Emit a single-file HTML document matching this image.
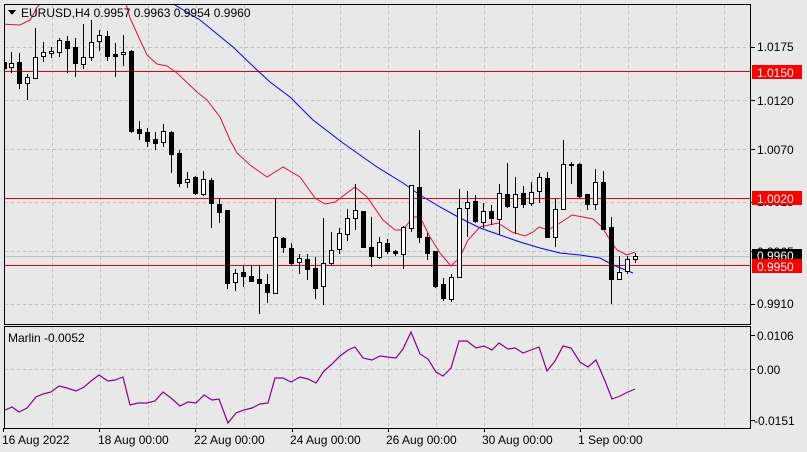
<!DOCTYPE html>
<html><head><meta charset="utf-8">
<style>
html,body{margin:0;padding:0;background:#e8e8e8;}
body{width:807px;height:452px;overflow:hidden;position:relative;font-family:"Liberation Sans",sans-serif;}
svg{position:absolute;left:0;top:0;}
text{font-family:"Liberation Sans",sans-serif;font-size:12px;}
</style></head><body>
<svg id="s" width="807" height="452" xmlns="http://www.w3.org/2000/svg" shape-rendering="crispEdges">
<rect width="807" height="452" fill="#e8e8e8"/>
<defs><clipPath id="mc"><rect x="5" y="5" width="745" height="319"/></clipPath>
<clipPath id="ic"><rect x="5" y="327" width="745" height="101"/></clipPath></defs>
<g id="grid" stroke="#c4c4c4" stroke-dasharray="3,3" stroke-width="1"></g>
<g clip-path="url(#mc)">
<line x1="4" y1="256.5" x2="750" y2="256.5" stroke="#c0c0c0"/>
<line x1="4" y1="71.5" x2="750" y2="71.5" stroke="#f00000"/>
<line x1="4" y1="198.5" x2="750" y2="198.5" stroke="#f00000"/>
<line x1="4" y1="265.5" x2="750" y2="265.5" stroke="#f00000"/>
<polyline shape-rendering="auto" fill="none" stroke="#0000ff" stroke-width="1" points="170,2 200,20 233,47 257,70 270,82 290,97 313,120 343,143 377,167 403,183 420,195 440,207 460,218 480,228 500,235 520,242 540,248 560,253 580,255 600,258 613,265 633,273"/>
<polyline shape-rendering="auto" fill="none" stroke="#e0103c" stroke-width="1" points="0,24 20,25 30,20 33,15 37,7 45,0 70,4 90,4 110,0 125,0 130,18 140,40 147,55 157,64 167,66 177,73 197,92 207,100 220,117 230,140 237,153 250,165 267,177 283,167 300,177 315,198 325,204 335,202 355,187 367,197 383,220 395,230 403,230 413,217 420,217 430,237 440,253 451,266 460,257 468,240 480,227 498,223 512,232 525,236 533,232 539,227 548,230 560,223 572,215 583,217 593,219 602,227 610,240 617,250 627,255 635,252"/>
<g id="candles"></g>
</g>
<g clip-path="url(#ic)">
<polyline shape-rendering="auto" fill="none" stroke="#8b008b" stroke-width="1.2" points="3,411 12,407 19,412 27,408 36,397 43,394 51,392 59,386 67,388 76,391 84,387 91,381 99,375 108,381 115,380 123,377 130,405 138,403 147,403 155,401 163,392 171,398 180,406 188,402 196,403 204,395 212,400 219,399 228,423 236,413 244,410 252,408 260,404 268,403 275,378 283,378 291,382 300,377 308,379 316,383 324,371 332,364 340,356 348,350 355,347 363,358 372,360 380,356 387,357 396,358 403,349 411,332 420,354 428,359 436,372 443,376 451,368 459,341 467,341 476,348 484,346 492,350 499,343 508,349 515,348 523,353 531,350 539,347 547,371 555,361 563,346 571,348 580,362 588,367 596,360 605,381 612,399 620,396 628,392 635,389"/>
</g>
<rect x="4.5" y="4.5" width="746" height="320" fill="none" stroke="#000"/>
<rect x="4.5" y="326.5" width="746" height="102" fill="none" stroke="#000"/>
<g stroke="#000">
<line x1="751" y1="47.5" x2="755" y2="47.5"/><line x1="751" y1="100.5" x2="755" y2="100.5"/><line x1="751" y1="149.5" x2="755" y2="149.5"/>
<line x1="751" y1="202.5" x2="755" y2="202.5"/><line x1="751" y1="251.5" x2="755" y2="251.5"/><line x1="751" y1="304.5" x2="755" y2="304.5"/>
<line x1="751" y1="335.5" x2="755" y2="335.5"/><line x1="751" y1="369.5" x2="755" y2="369.5"/><line x1="751" y1="420.5" x2="755" y2="420.5"/>
<line x1="3.5" y1="428" x2="3.5" y2="432"/><line x1="99.5" y1="428" x2="99.5" y2="432"/><line x1="195.5" y1="428" x2="195.5" y2="432"/><line x1="292.5" y1="428" x2="292.5" y2="432"/><line x1="388.5" y1="428" x2="388.5" y2="432"/><line x1="484.5" y1="428" x2="484.5" y2="432"/><line x1="580.5" y1="428" x2="580.5" y2="432"/>
</g>
<g fill="#000">
<text x="757" y="51">1.0175</text>
<text x="757" y="105">1.0120</text>
<text x="757" y="154">1.0070</text>
<text x="757" y="206">1.0015</text>
<text x="757" y="256">0.9965</text>
<text x="757" y="308">0.9910</text>
<text x="757" y="340">0.0106</text>
<text x="757" y="374">0.00</text>
<text x="754" y="425">-0.0151</text>
</g>
<rect x="752" y="65" width="50" height="14" fill="#ff0000"/><text x="757" y="77" fill="#fff">1.0150</text>
<rect x="752" y="191" width="50" height="14" fill="#ff0000"/><text x="757" y="203" fill="#fff">1.0020</text>
<rect x="752" y="249" width="50" height="10" fill="#000"/><text x="757" y="260" fill="#fff">0.9960</text>
<rect x="752" y="259" width="50" height="14" fill="#ff0000"/><text x="757" y="271" fill="#fff">0.9950</text>
<polygon points="8,10 16,10 12,15" fill="#000"/>
<text x="21" y="17" fill="#000">EURUSD,H4  0.9957 0.9963 0.9954 0.9960</text>
<text x="8" y="342" fill="#000">Marlin -0.0052</text>
<g fill="#000">
<text x="2" y="444">16 Aug 2022</text>
<text x="98" y="444">18 Aug 00:00</text>
<text x="194" y="444">22 Aug 00:00</text>
<text x="290" y="444">24 Aug 00:00</text>
<text x="386" y="444">26 Aug 00:00</text>
<text x="482" y="444">30 Aug 00:00</text>
<text x="578" y="444">1 Sep 00:00</text>
</g>
</svg>
<script>
(function(){
var NS="http://www.w3.org/2000/svg";
var g=document.getElementById("grid");
function L(x1,y1,x2,y2){var l=document.createElementNS(NS,"line");l.setAttribute("x1",x1);l.setAttribute("y1",y1);l.setAttribute("x2",x2);l.setAttribute("y2",y2);g.appendChild(l);}
[47,100,149,202,251,304].forEach(function(y){L(5,y+.5,750,y+.5);});
L(5,369.5,750,369.5);
for(var x=52;x<750;x+=48){L(x+.5,5,x+.5,324);L(x+.5,327,x+.5,428);}
var c=document.getElementById("candles");
var d=[[4,53,62,68,73,0],[11,52,63,67,72,1],[19,53,62,83,88,0],[27,74,77,83,99,1],[35,28,57,78,78,1],[43,42,52,56,61,1],[51,47,51,53,57,1],[59,38,40,52,56,1],[67,36,41,48,72,0],[75,38,47,63,76,0],[83,24,57,64,68,1],[91,20,42,57,60,1],[99,30,35,41,50,1],[107,31,36,56,60,0],[115,43,54,56,76,0],[123,35,52,54,65,1],[131,50,51,131,132,0],[139,121,129,133,139,0],[147,128,132,141,146,0],[155,132,139,143,149,0],[163,124,131,142,146,1],[171,131,132,154,172,0],[179,150,153,183,186,0],[187,172,179,182,187,1],[195,176,177,193,194,0],[203,171,179,194,195,1],[211,178,180,203,227,0],[219,198,204,212,222,0],[227,210,210,283,288,0],[235,269,273,282,290,1],[243,266,272,276,286,0],[251,266,276,281,281,0],[259,266,279,283,313,0],[267,274,284,292,302,0],[275,198,237,293,293,1],[283,237,238,247,252,0],[291,243,248,263,264,0],[299,254,258,262,273,1],[307,254,259,269,279,0],[315,257,268,288,298,0],[323,218,263,286,304,1],[331,232,250,263,264,1],[339,228,233,249,253,1],[347,209,218,234,240,1],[355,184,210,218,229,1],[363,211,211,247,247,0],[371,217,247,256,266,0],[379,237,242,257,258,1],[387,239,243,251,253,0],[395,250,251,253,255,0],[403,226,227,254,268,1],[411,185,185,228,231,1],[419,130,187,237,242,0],[427,233,237,253,259,0],[435,251,251,286,287,0],[443,278,284,298,300,0],[451,274,277,299,301,1],[459,189,208,277,277,1],[467,191,202,208,236,1],[475,195,201,221,222,0],[483,203,211,222,227,1],[491,205,211,218,224,0],[499,184,193,219,234,1],[507,163,194,206,207,0],[515,177,194,207,233,1],[523,186,193,204,207,0],[531,182,192,203,205,1],[539,173,177,191,202,1],[547,172,178,237,237,0],[555,199,209,237,246,1],[563,140,164,209,209,1],[571,162,164,165,183,0],[579,163,164,196,197,0],[587,194,194,204,209,0],[595,169,182,204,209,1],[603,171,182,229,229,0],[611,217,227,279,303,0],[619,256,272,279,279,1],[627,256,259,271,273,1],[635,253,256,259,262,1]];
d.forEach(function(k){
var x=k[0];
var w=document.createElementNS(NS,"line");w.setAttribute("x1",x+.5);w.setAttribute("x2",x+.5);w.setAttribute("y1",k[1]);w.setAttribute("y2",k[4]+1);w.setAttribute("stroke","#000");c.appendChild(w);
var r=document.createElementNS(NS,"rect");
var h=Math.max(k[3]-k[2],1);
if(k[5]){r.setAttribute("x",x-1.5);r.setAttribute("y",k[2]+.5);r.setAttribute("width",4);r.setAttribute("height",h);r.setAttribute("fill","#fff");r.setAttribute("stroke","#000");}
else{r.setAttribute("x",x-2);r.setAttribute("y",k[2]);r.setAttribute("width",5);r.setAttribute("height",h+1);r.setAttribute("fill","#000");}
c.appendChild(r);
});
})();
</script>
</body></html>
